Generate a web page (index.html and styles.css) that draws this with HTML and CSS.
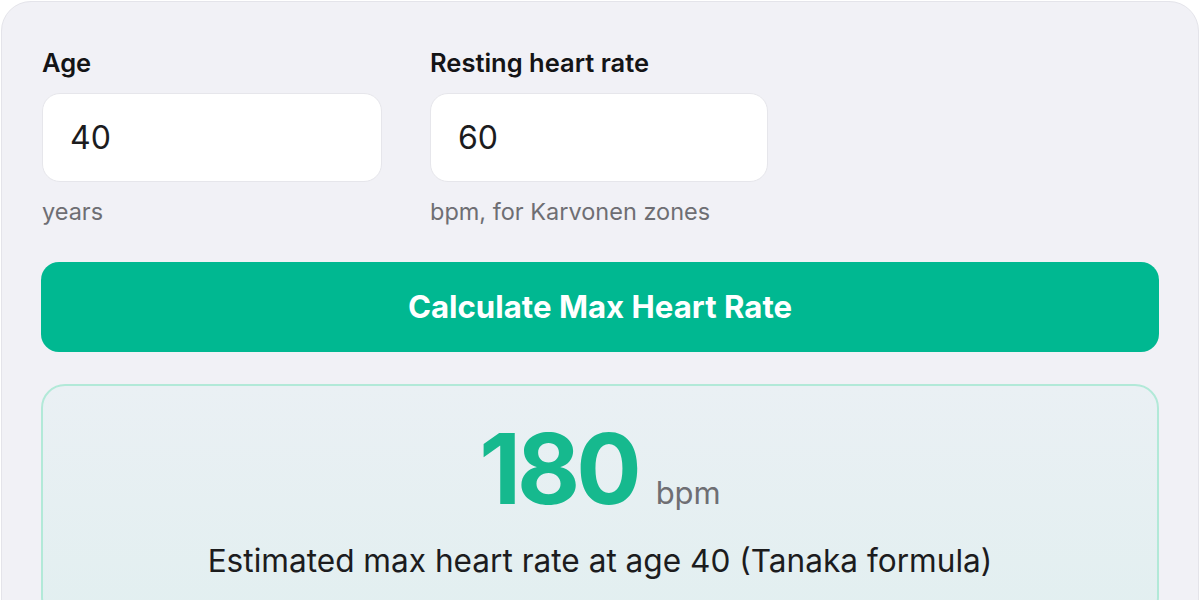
FILE: index.html
```html
<!DOCTYPE html>
<html lang="en">
<head>
    <meta charset="UTF-8" />
    <meta name="viewport" content="width=device-width, initial-scale=1.0" />
    <title>Max Heart Rate Calculator</title>
    <link rel="stylesheet" href="styles.css">
</head>
<body>
    <div class="card">
        <div class="fields">
            <div class="field">
                <label for="age">Age</label>
                <input id="age" type="text" value="40">
                <div class="hint">years</div>
            </div>
            <div class="field">
                <label for="rest">Resting heart rate</label>
                <input id="rest" type="text" value="60">
                <div class="hint">bpm, for Karvonen zones</div>
            </div>
        </div>

        <button class="calc-btn">Calculate Max Heart Rate</button>

        <div class="result">
            <div class="result-value">
                <span class="big">180</span>
                <span class="unit">bpm</span>
            </div>
            <div class="result-text">Estimated max heart rate at age 40 (Tanaka formula)</div>
        </div>
    </div>
</body>
</html>
```

FILE: styles.css
```css
body {
    font-family: Inter, "Noto Sans", sans-serif;
    background-color: #ffffff;
    margin: 0;
    color: #1c1c1e;
}

.card {
    margin: 1px 1px 0 1px;
    background: #f1f1f6;
    border: 1px solid #e4e4ea;
    border-radius: 30px;
    padding: 46px 39px 40px 39px;
}

.fields {
    display: grid;
    grid-template-columns: 340px 338px;
    gap: 48px;
    padding-left: 1px;
}

.field label {
    display: block;
    font-size: 25.5px;
    line-height: 30px;
    font-weight: 600;
    color: #141416;
    margin-bottom: 15px;
}

.field input {
    box-sizing: border-box;
    width: 100%;
    height: 89px;
    border: 1.5px solid #e6e6eb;
    border-radius: 18px;
    background: #ffffff;
    padding: 0 27px;
    font-family: inherit;
    font-size: 32px;
    color: #1c1c1e;
    outline: none;
}

.hint {
    margin-top: 16px;
    font-size: 23.5px;
    line-height: 28px;
    color: #6e6e73;
}

.calc-btn {
    display: block;
    width: 100%;
    height: 90px;
    margin-top: 36px;
    border: none;
    border-radius: 18px;
    background-color: #00b891;
    color: #ffffff;
    font-family: inherit;
    font-size: 31.2px;
    font-weight: 700;
    cursor: pointer;
}

.result {
    margin-top: 32px;
    border: 2px solid #b2e9d8;
    border-radius: 24px;
    background: linear-gradient(180deg, #eaf0f4 0%, #e2eff0 100%);
    padding: 34px 20px 40px;
    text-align: center;
}

.result-value {
    display: flex;
    justify-content: center;
    align-items: baseline;
    gap: 18px;
}

.big {
    font-size: 97px;
    line-height: 97px;
    font-weight: 700;
    letter-spacing: -4px;
    color: #16b98e;
}

.unit {
    font-size: 31px;
    color: #6e6e73;
}

.result-text {
    margin-top: 25px;
    font-size: 31.6px;
    line-height: 38px;
}
```
